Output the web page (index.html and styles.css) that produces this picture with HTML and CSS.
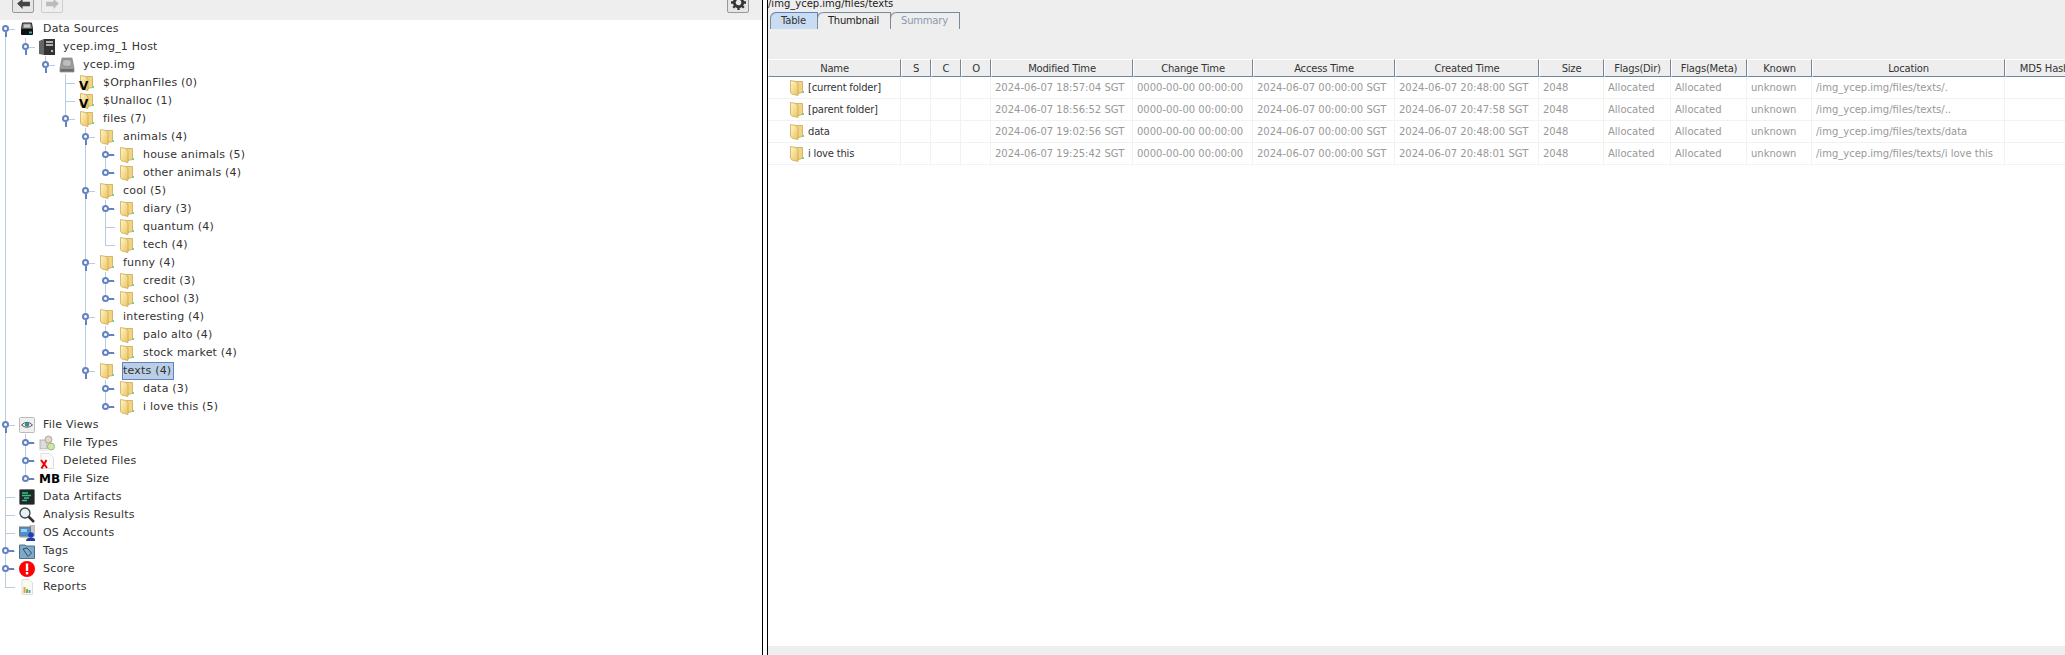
FILE: index.html
```html
<!DOCTYPE html>
<html lang="en">

<head>
    <meta charset="UTF-8">
    <title>Autopsy</title>
    <link rel="stylesheet" href="styles.css">
</head>

<body>
    <!-- icon set -->
    <svg class="defs" width="0" height="0">
        <defs>
            <linearGradient id="leaf" x1="0" y1="0" x2="1" y2="1">
                <stop offset="0" stop-color="#fff6cc" />
                <stop offset="1" stop-color="#eac35f" />
            </linearGradient>
            <symbol id="folder" viewBox="0 0 14 16">
                <path d="M6 1.5H12.5V12.5L8 13.5Z" fill="#f2d47e" stroke="#c2a052" stroke-width=".7" />
                <path d="M.5.5 6 1.5 8 4V15.5L2 14 .5 12.5Z" fill="url(#leaf)" stroke="#cdaa55" stroke-width=".8" />
                <rect x="12" y="11" width="2" height="2" fill="#7ccf8a" />
            </symbol>
            <symbol id="disk" viewBox="0 0 16 16">
                <path d="M3.500 2H12.500L13.500 8H2.500Z" fill="#8a8a8a" stroke="#222" />
                <rect x="5" y="3.500" width="6" height="3" fill="#ccc" />
                <rect x="2" y="8" width="12" height="6" rx="1" fill="#111" />
                <rect x="10" y="10.500" width="3" height="2" fill="#2bb5a5" />
            </symbol>
            <symbol id="tower" viewBox="0 0 16 16">
                <path d="M0 2 5 0V16L0 15Z" fill="#666" />
                <rect x="5" y="0" width="11" height="16" fill="#333" />
                <path d="M7 3H14M7 6H14" stroke="#ddd" stroke-width="1.3" />
                <rect x="12" y="11" width="2" height="2" fill="#bbb" />
            </symbol>
            <symbol id="hdd" viewBox="0 0 16 16">
                <path d="M3 1H13L15 11V15H1V11Z" fill="#9b9b9b" stroke="#777" stroke-width=".6" />
                <ellipse cx="8" cy="6" rx="4.500" ry="3.500" fill="#bdbdbd" stroke="#808080" stroke-width=".6" />
                <rect x="1.500" y="12" width="13" height="2.500" fill="#6d6d6d" />
            </symbol>
            <symbol id="eye" viewBox="0 0 16 16">
                <rect x=".5" y=".5" width="15" height="15" rx="1" fill="#efefef" stroke="#bbb" />
                <path d="M2.500 8Q8 2.500 13.500 8 8 12.500 2.500 8Z" fill="#fff" stroke="#555" />
                <circle cx="8" cy="7.500" r="2.300" fill="#2f8f8f" />
            </symbol>
            <symbol id="types" viewBox="0 0 16 16">
                <rect x="1" y="5" width="7" height="9" fill="#ddd" stroke="#999" stroke-width=".7" />
                <circle cx="9.500" cy="4.500" r="3.500" fill="#e4d5c5" stroke="#999" stroke-width=".8" />
                <circle cx="12" cy="11.500" r="3.500" fill="#d3e6a8" stroke="#8aa65a" stroke-width=".8" />
                <rect x="0" y="14" width="10" height="2" fill="#eee" />
            </symbol>
            <symbol id="deleted" viewBox="0 0 16 16">
                <path d="M2 .5H10.500L14.500 4.500V15.500H2Z" fill="#fbfbfb" stroke="#ddd" />
                <path d="M2 7 8 15M7.500 7 2.500 15.500" stroke="#e00" stroke-width="2" fill="none" />
            </symbol>
            <symbol id="artifacts" viewBox="0 0 16 16">
                <rect x=".5" y=".5" width="15" height="15" rx="1" fill="#1d2a28" stroke="#777" />
                <path d="M3 4H9M3 6.500H12M5 9H10M3 11.500H8" stroke="#35c28c" stroke-width="1.300" />
            </symbol>
            <symbol id="search" viewBox="0 0 16 16">
                <circle cx="6" cy="6" r="5" fill="#e6f0f8" stroke="#444" stroke-width="1.300" />
                <path d="M9.500 9.500 15 15" stroke="#333" stroke-width="2.500" />
            </symbol>
            <symbol id="accounts" viewBox="0 0 16 16">
                <rect x="11" y="0" width="5" height="11" fill="#c9c9c9" stroke="#999" stroke-width=".5" />
                <rect x=".5" y="2" width="11" height="9" fill="#4a90d0" stroke="#777" />
                <rect x="2" y="4" width="6" height="3" fill="#9fd0f0" />
                <rect x="1" y="11" width="9" height="1.500" fill="#999" />
                <circle cx="12" cy="10" r="2.800" fill="#1f3fb0" />
                <path d="M7 16Q7 12.500 12 12.500T16 16Z" fill="#1f3fb0" />
            </symbol>
            <symbol id="tag" viewBox="0 0 16 16">
                <path d="M.5 2H6L7 3H15.500V15.500H.5Z" fill="#7fa9c8" stroke="#4f6f88" />
                <path d="M4 6 8 5 12.500 10 9 13.500Z" fill="none" stroke="#2f4f68" />
            </symbol>
            <symbol id="score" viewBox="0 0 16 16">
                <circle cx="8" cy="8" r="8" fill="#f00" />
                <rect x="6.800" y="2.500" width="2.400" height="7.500" fill="#fff" />
                <rect x="6.800" y="11" width="2.400" height="2.400" fill="#fff" />
            </symbol>
            <symbol id="report" viewBox="0 0 16 16">
                <path d="M3 .5H10L13.500 4V15.500H3Z" fill="#fafaf2" stroke="#ddd" />
                <rect x="4.500" y="8" width="2" height="6" fill="#d9a93c" />
                <rect x="7" y="10" width="2" height="4" fill="#7cb342" />
                <rect x="9.500" y="11" width="2" height="3" fill="#4aa3df" />
            </symbol>
            <symbol id="gear" viewBox="0 0 16 16">
                <circle cx="8" cy="8" r="4.500" fill="none" stroke="#333" stroke-width="3" />
                <path d="M8 0V16M0 8H16M2.300 2.300 13.700 13.700M13.700 2.300 2.300 13.700" stroke="#333" stroke-width="2.500" stroke-dasharray="3 10 3" />
            </symbol>
        </defs>
    </svg>

    <div class="app">
        <div class="left">
            <div class="toolbar">
                <button class="tool">
                    <svg viewBox="0 0 16 12"><path d="M1 5 7 0V3H15V8H7V11Z" fill="#444" /></svg>
                </button>
                <button class="tool off">
                    <svg viewBox="0 0 16 12"><path d="M15 5 9 0V3H1V8H9V11Z" fill="#bbb" /></svg>
                </button>
                <button class="tool gear"><svg viewBox="0 0 16 16"><use href="#gear" /></svg></button>
            </div>

            <ul class="tree">
                <li class="open">
                    <div class="node"><i class="handle"></i><svg class="ico"><use href="#disk" /></svg><span class="label">Data Sources</span></div>
                    <ul>
                        <li class="open">
                            <div class="node"><i class="handle"></i><svg class="ico"><use href="#tower" /></svg><span class="label">ycep.img_1 Host</span></div>
                            <ul>
                                <li class="open">
                                    <div class="node"><i class="handle"></i><svg class="ico"><use href="#hdd" /></svg><span class="label">ycep.img</span></div>
                                    <ul>
                                        <li>
                                            <div class="node"><span class="virt"><svg class="ico"><use href="#folder" /></svg><b>V</b></span><span class="label">$OrphanFiles (0)</span></div>
                                        </li>
                                        <li>
                                            <div class="node"><span class="virt"><svg class="ico"><use href="#folder" /></svg><b>V</b></span><span class="label">$Unalloc (1)</span></div>
                                        </li>
                                        <li class="open">
                                            <div class="node"><i class="handle"></i><svg class="ico"><use href="#folder" /></svg><span class="label">files (7)</span></div>
                                            <ul>
                                                <li class="open">
                                                    <div class="node"><i class="handle"></i><svg class="ico"><use href="#folder" /></svg><span class="label">animals (4)</span></div>
                                                    <ul>
                                                        <li>
                                                            <div class="node"><i class="handle"></i><svg class="ico"><use href="#folder" /></svg><span class="label">house animals (5)</span></div>
                                                        </li>
                                                        <li>
                                                            <div class="node"><i class="handle"></i><svg class="ico"><use href="#folder" /></svg><span class="label">other animals (4)</span></div>
                                                        </li>
                                                    </ul>
                                                </li>
                                                <li class="open">
                                                    <div class="node"><i class="handle"></i><svg class="ico"><use href="#folder" /></svg><span class="label">cool (5)</span></div>
                                                    <ul>
                                                        <li>
                                                            <div class="node"><i class="handle"></i><svg class="ico"><use href="#folder" /></svg><span class="label">diary (3)</span></div>
                                                        </li>
                                                        <li>
                                                            <div class="node"><svg class="ico"><use href="#folder" /></svg><span class="label">quantum (4)</span></div>
                                                        </li>
                                                        <li>
                                                            <div class="node"><svg class="ico"><use href="#folder" /></svg><span class="label">tech (4)</span></div>
                                                        </li>
                                                    </ul>
                                                </li>
                                                <li class="open">
                                                    <div class="node"><i class="handle"></i><svg class="ico"><use href="#folder" /></svg><span class="label">funny (4)</span></div>
                                                    <ul>
                                                        <li>
                                                            <div class="node"><i class="handle"></i><svg class="ico"><use href="#folder" /></svg><span class="label">credit (3)</span></div>
                                                        </li>
                                                        <li>
                                                            <div class="node"><i class="handle"></i><svg class="ico"><use href="#folder" /></svg><span class="label">school (3)</span></div>
                                                        </li>
                                                    </ul>
                                                </li>
                                                <li class="open">
                                                    <div class="node"><i class="handle"></i><svg class="ico"><use href="#folder" /></svg><span class="label">interesting (4)</span></div>
                                                    <ul>
                                                        <li>
                                                            <div class="node"><i class="handle"></i><svg class="ico"><use href="#folder" /></svg><span class="label">palo alto (4)</span></div>
                                                        </li>
                                                        <li>
                                                            <div class="node"><i class="handle"></i><svg class="ico"><use href="#folder" /></svg><span class="label">stock market (4)</span></div>
                                                        </li>
                                                    </ul>
                                                </li>
                                                <li class="open">
                                                    <div class="node"><i class="handle"></i><svg class="ico"><use href="#folder" /></svg><span class="label selected">texts (4)</span></div>
                                                    <ul>
                                                        <li>
                                                            <div class="node"><i class="handle"></i><svg class="ico"><use href="#folder" /></svg><span class="label">data (3)</span></div>
                                                        </li>
                                                        <li>
                                                            <div class="node"><i class="handle"></i><svg class="ico"><use href="#folder" /></svg><span class="label">i love this (5)</span></div>
                                                        </li>
                                                    </ul>
                                                </li>
                                            </ul>
                                        </li>
                                    </ul>
                                </li>
                            </ul>
                        </li>
                    </ul>
                </li>
                <li class="open">
                    <div class="node"><i class="handle"></i><svg class="ico"><use href="#eye" /></svg><span class="label">File Views</span></div>
                    <ul>
                        <li>
                            <div class="node"><i class="handle"></i><svg class="ico"><use href="#types" /></svg><span class="label">File Types</span></div>
                        </li>
                        <li>
                            <div class="node"><i class="handle"></i><svg class="ico"><use href="#deleted" /></svg><span class="label">Deleted Files</span></div>
                        </li>
                        <li>
                            <div class="node"><i class="handle"></i><b class="ico mb">MB</b><span class="label">File Size</span></div>
                        </li>
                    </ul>
                </li>
                <li>
                    <div class="node"><svg class="ico"><use href="#artifacts" /></svg><span class="label">Data Artifacts</span></div>
                </li>
                <li>
                    <div class="node"><svg class="ico"><use href="#search" /></svg><span class="label">Analysis Results</span></div>
                </li>
                <li>
                    <div class="node"><svg class="ico"><use href="#accounts" /></svg><span class="label">OS Accounts</span></div>
                </li>
                <li>
                    <div class="node"><i class="handle"></i><svg class="ico"><use href="#tag" /></svg><span class="label">Tags</span></div>
                </li>
                <li>
                    <div class="node"><i class="handle"></i><svg class="ico"><use href="#score" /></svg><span class="label">Score</span></div>
                </li>
                <li>
                    <div class="node"><svg class="ico"><use href="#report" /></svg><span class="label">Reports</span></div>
                </li>
            </ul>
        </div>

        <div class="right">
            <div class="path">/img_ycep.img/files/texts</div>
            <div class="tabs">
                <span class="tab active">Table</span>
                <span class="tab">Thumbnail</span>
                <span class="tab disabled">Summary</span>
            </div>

            <div class="listing">
                <table>
                    <colgroup>
                        <col class="w-name">
                        <col class="w-flag">
                        <col class="w-flag">
                        <col class="w-flag">
                        <col class="w-mod">
                        <col class="w-change">
                        <col class="w-mod">
                        <col class="w-created">
                        <col class="w-size">
                        <col class="w-dir">
                        <col class="w-meta">
                        <col class="w-size">
                        <col class="w-loc">
                        <col class="w-hash">
                    </colgroup>
                    <thead>
                        <tr>
                            <th>Name</th>
                            <th>S</th>
                            <th>C</th>
                            <th>O</th>
                            <th>Modified Time</th>
                            <th>Change Time</th>
                            <th>Access Time</th>
                            <th>Created Time</th>
                            <th>Size</th>
                            <th>Flags(Dir)</th>
                            <th>Flags(Meta)</th>
                            <th>Known</th>
                            <th>Location</th>
                            <th>MD5 Hash</th>
                        </tr>
                    </thead>
                    <tbody>
                        <tr>
                            <td class="name"><svg class="ico"><use href="#folder" /></svg>[current folder]</td>
                            <td></td>
                            <td></td>
                            <td></td>
                            <td>2024-06-07 18:57:04 SGT</td>
                            <td>0000-00-00 00:00:00</td>
                            <td>2024-06-07 00:00:00 SGT</td>
                            <td>2024-06-07 20:48:00 SGT</td>
                            <td>2048</td>
                            <td>Allocated</td>
                            <td>Allocated</td>
                            <td>unknown</td>
                            <td>/img_ycep.img/files/texts/.</td>
                            <td></td>
                        </tr>
                        <tr>
                            <td class="name"><svg class="ico"><use href="#folder" /></svg>[parent folder]</td>
                            <td></td>
                            <td></td>
                            <td></td>
                            <td>2024-06-07 18:56:52 SGT</td>
                            <td>0000-00-00 00:00:00</td>
                            <td>2024-06-07 00:00:00 SGT</td>
                            <td>2024-06-07 20:47:58 SGT</td>
                            <td>2048</td>
                            <td>Allocated</td>
                            <td>Allocated</td>
                            <td>unknown</td>
                            <td>/img_ycep.img/files/texts/..</td>
                            <td></td>
                        </tr>
                        <tr>
                            <td class="name"><svg class="ico"><use href="#folder" /></svg>data</td>
                            <td></td>
                            <td></td>
                            <td></td>
                            <td>2024-06-07 19:02:56 SGT</td>
                            <td>0000-00-00 00:00:00</td>
                            <td>2024-06-07 00:00:00 SGT</td>
                            <td>2024-06-07 20:48:00 SGT</td>
                            <td>2048</td>
                            <td>Allocated</td>
                            <td>Allocated</td>
                            <td>unknown</td>
                            <td>/img_ycep.img/files/texts/data</td>
                            <td></td>
                        </tr>
                        <tr>
                            <td class="name"><svg class="ico"><use href="#folder" /></svg>i love this</td>
                            <td></td>
                            <td></td>
                            <td></td>
                            <td>2024-06-07 19:25:42 SGT</td>
                            <td>0000-00-00 00:00:00</td>
                            <td>2024-06-07 00:00:00 SGT</td>
                            <td>2024-06-07 20:48:01 SGT</td>
                            <td>2048</td>
                            <td>Allocated</td>
                            <td>Allocated</td>
                            <td>unknown</td>
                            <td>/img_ycep.img/files/texts/i love this</td>
                            <td></td>
                        </tr>
                    </tbody>
                </table>
            </div>
            <div class="scrollbar"></div>
        </div>
    </div>
</body>

</html>
```
FILE: styles.css
```css
* {
    margin: 0;
    padding: 0;
    box-sizing: border-box;
    list-style: none;
}

html,
body {
    height: 100%;
    overflow: hidden;
}

body {
    background: #fff;
    color: #333;
    font-family: "DejaVu Sans", sans-serif;
    font-size: 11px;
}

.defs {
    position: absolute;
}

.app {
    display: flex;
    height: 655px;
}

/* left side */
.left {
    width: 763px;
    flex: none;
    border-right: 1px solid #000;
}

.toolbar {
    display: flex;
    height: 20px;
    background: #eee;
    padding-left: 12px;
    gap: 7px;
    overflow: hidden;
}

.tool {
    display: flex;
    align-items: flex-end;
    justify-content: center;
    width: 22px;
    height: 22px;
    margin-top: -9px;
    padding-bottom: 2px;
    background: #e6e6e6;
    border: 1px solid #999;
    border-radius: 2px;
}

.tool svg {
    width: 15px;
    height: 11px;
}

.tool.off {
    border-color: #ccc;
    background: #eee;
}

.tool.gear {
    margin-left: auto;
    margin-right: 13px;
}

.tool.gear svg {
    height: 15px;
}

/* tree */
.ico {
    display: block;
    flex: none;
    width: 16px;
    height: 16px;
}

.tree ul {
    padding-left: 20px;
}

.tree li {
    position: relative;
}

/* guide lines */
.tree li::before {
    content: "";
    position: absolute;
    left: 5px;
    top: 0;
    bottom: 0;
    border-left: 1px solid #b8cce4;
}

.tree li:last-child::before {
    bottom: auto;
    height: 9px;
}

.tree>li:first-child::before {
    top: 9px;
}

.tree li::after {
    content: "";
    position: absolute;
    left: 5px;
    top: 9px;
    width: 10px;
    border-top: 1px solid #b8cce4;
}

.node {
    position: relative;
    z-index: 1;
    display: flex;
    align-items: center;
    height: 18px;
    padding-left: 19px;
    white-space: nowrap;
}

.label {
    margin-left: 7px;
    padding-right: 2px;
    line-height: 16px;
    letter-spacing: .2px;
    border: 1px solid transparent;
}

.label.selected {
    height: 18px;
    background: #b8cfe5;
    border-color: #6382bf;
}

.handle {
    position: absolute;
    left: 2px;
    top: 5px;
    width: 7px;
    height: 7px;
    background: #fff;
    border: 2px solid #6382bf;
    border-radius: 50%;
}

.handle::after {
    content: "";
    position: absolute;
    left: 5px;
    top: 1px;
    width: 5px;
    height: 2px;
    background: #6382bf;
}

.open>.node>.handle::after {
    left: 1px;
    top: 5px;
    width: 2px;
    height: 5px;
}

.virt {
    position: relative;
    display: block;
}

.virt b {
    position: absolute;
    left: 0;
    top: 5px;
    color: #000;
    font-size: 12px;
    line-height: 13px;
}

.ico.mb {
    color: #000;
    font-size: 12px;
    line-height: 16px;
}

/* right side */
.right {
    display: flex;
    flex-direction: column;
    width: 1298px;
    flex: none;
    margin-left: 4px;
    border-left: 1px solid #000;
    background: #eee;
    font-size: 10px;
    overflow: hidden;
}

.path {
    height: 12px;
    margin-top: -5px;
    line-height: 17px;
    color: #222;
    white-space: nowrap;
}

.tabs {
    display: flex;
    height: 17px;
    margin-top: 5px;
    padding-left: 3px;
}

.tab {
    padding: 0 11px 0 10px;
    line-height: 16px;
    letter-spacing: -.2px;
    border: 1px solid #7a8a99;
    border-bottom: 0;
    border-left: 0;
    border-top-left-radius: 6px;
    color: #222;
    box-shadow: -1px 0 0 #7a8a99;
}

.tab.active {
    background: #c8ddf2;
    border-color: #6382bf;
    color: #333;
}

.tab.disabled {
    color: #8a9ab0;
}

.listing {
    flex: 1;
    margin-top: 30px;
    background: #fff;
    overflow: hidden;
}

table {
    width: 1316px;
    table-layout: fixed;
    border-collapse: separate;
    border-spacing: 0;
}

.w-name {
    width: 133px;
}

.w-flag {
    width: 30px;
}

.w-mod {
    width: 142px;
}

.w-change {
    width: 120px;
}

.w-created {
    width: 144px;
}

.w-size {
    width: 65px;
}

.w-dir {
    width: 67px;
}

.w-meta {
    width: 76px;
}

.w-loc {
    width: 193px;
}

.w-hash {
    width: 79px;
}

th {
    height: 18px;
    background: #eee;
    border-top: 1px solid #fff;
    border-left: 1px solid #fff;
    border-right: 1px solid #71869a;
    border-bottom: 1px solid #71869a;
    font-weight: normal;
    letter-spacing: -.2px;
    color: #333;
    white-space: nowrap;
    overflow: hidden;
}

td {
    height: 22px;
    padding-left: 4px;
    border-right: 1px solid #f2f2f2;
    border-bottom: 1px solid #f2f2f2;
    color: #999;
    white-space: nowrap;
    overflow: hidden;
}

td.name {
    padding-left: 21px;
    letter-spacing: -.2px;
    color: #333;
}

td.name .ico {
    display: inline-block;
    margin-right: 3px;
    vertical-align: middle;
}

.scrollbar {
    flex: none;
    height: 9px;
}
```
